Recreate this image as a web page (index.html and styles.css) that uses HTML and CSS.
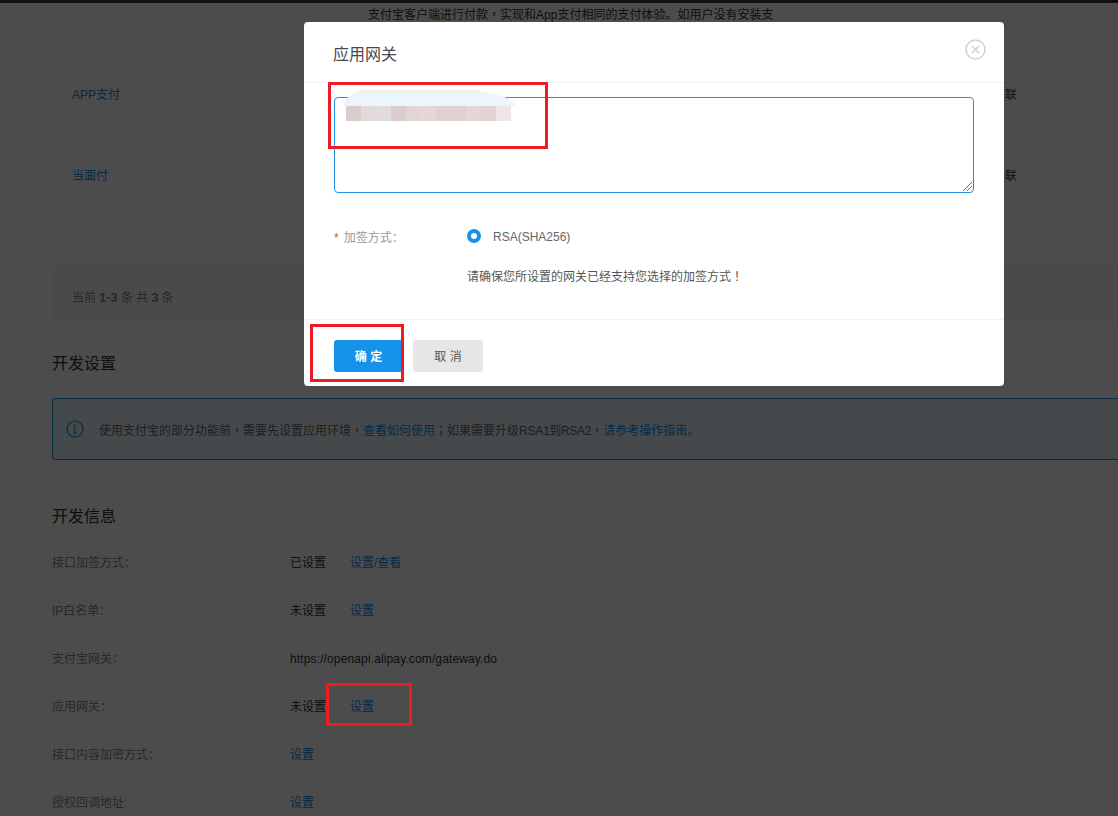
FILE: index.html
```html
<!DOCTYPE html>
<html lang="en">
<head>
    <meta charset="UTF-8">
    <title>应用网关</title>
    <link rel="stylesheet" href="styles.css">
</head>
<body>

    <div class="top-bar"></div>

    <div class="page">
        <p class="intro">支付宝客户端进行付款<span class="mid">，</span>实现和App支付相同的支付体验。如用户没有安装支</p>

        <div class="table">
            <div class="table-row">
                <a class="link">APP支付</a>
                <span class="row-end">关联</span>
            </div>
            <div class="table-row">
                <a class="link">当面付</a>
                <span class="row-end">关联</span>
            </div>
            <div class="table-spare"></div>
            <div class="table-foot">当前<b>1-3</b>条 共<b>3</b>条</div>
        </div>

        <h3 class="section-title">开发设置</h3>
        <div class="notice">
            <svg class="notice-icon" width="18" height="18" viewBox="0 0 18 18">
                <circle cx="9" cy="9" r="8" fill="none" stroke="currentColor" stroke-width="1.2"/>
                <path d="M7.5 5.2h2.2M8.6 5v1.2M7.4 8h1.5v5M7 13h4" fill="none" stroke="currentColor" stroke-width="1.1"/>
            </svg>
            <span>使用支付宝的部分功能前<span class="mid">，</span>需要先设置应用环境<span class="mid">，</span><a class="link">查看如何使用</a><span class="mid">；</span>如果需要升级<span class="tight">RSA1到RSA2</span><span class="mid">，</span><a class="link">请参考操作指南。</a></span>
        </div>

        <h3 class="section-title info-title">开发信息</h3>
        <div class="info-list">
            <div class="info-row">
                <span class="info-label">接口加签方式：</span>
                <span class="info-state">已设置</span>
                <a class="link">设置/查看</a>
            </div>
            <div class="info-row">
                <span class="info-label">IP白名单：</span>
                <span class="info-state">未设置</span>
                <a class="link">设置</a>
            </div>
            <div class="info-row">
                <span class="info-label">支付宝网关：</span>
                <span class="gateway-url">https://openapi.alipay.com/gateway.do</span>
            </div>
            <div class="info-row">
                <span class="info-label">应用网关：</span>
                <span class="info-state">未设置</span>
                <a class="link">设置</a>
            </div>
            <div class="info-row">
                <span class="info-label">接口内容加密方式：</span>
                <a class="link">设置</a>
            </div>
            <div class="info-row">
                <span class="info-label">授权回调地址:</span>
                <a class="link">设置</a>
            </div>
        </div>
    </div>

    <div class="overlay"></div>

    <div class="modal">
        <div class="modal-head">
            <h4 class="modal-title">应用网关</h4>
            <svg class="modal-close" width="21" height="21" viewBox="0 0 21 21">
                <circle cx="10.5" cy="10.5" r="9.5" fill="none" stroke="#d2d2d2" stroke-width="1.6"/>
                <path d="M6.8 6.8l7.4 7.4M14.2 6.8l-7.4 7.4" fill="none" stroke="#d2d2d2" stroke-width="1.6"/>
            </svg>
        </div>
        <div class="modal-body">
            <div class="gateway-input">
                <div class="smudge"></div>
                <div class="blur-text">
                    <i class="b1"></i><i class="b2"></i><i class="b3"></i><i class="b4"></i><i class="b5"></i><i class="b6"></i><i class="b7"></i><i class="b8"></i><i class="b9"></i><i class="b10"></i><i class="b11"></i>
                </div>
                <svg class="resize-grip" width="9" height="9" viewBox="0 0 9 9">
                    <path d="M0 9L9 0M4 9L9 4" stroke="#666" stroke-width="1" fill="none"/>
                </svg>
            </div>
            <div class="sign-row">
                <span class="sign-label"><em>*</em>加签方式：</span>
                <span class="radio"></span>
                <span class="radio-text">RSA(SHA256)</span>
            </div>
            <p class="sign-tip">请确保您所设置的网关已经支持您选择的加签方式<span class="mid">！</span></p>
        </div>
        <div class="modal-foot">
            <button class="btn btn-ok">确 定</button>
            <button class="btn btn-cancel">取 消</button>
        </div>
    </div>

    <!-- red markup boxes drawn on the screenshot -->
    <div class="mark mark-input"></div>
    <div class="mark mark-ok"></div>
    <div class="mark mark-set"></div>

</body>
</html>
```

FILE: styles.css
```css
/* General Styles */
html, body {
    height: 100%;
}
body {
    margin: 0;
    font-family: "Liberation Sans", "Noto Sans CJK SC", sans-serif;
    font-size: 12px;
    color: #000;
    background: #fff;
    overflow: hidden;
}
a {
    text-decoration: none;
}
.link {
    color: #0e8ee9;
}
/* full-width punctuation sits centred in the original font */
.mid {
    font-family: "Noto Sans CJK TC", sans-serif;
}
.tight {
    letter-spacing: -0.3px;
}

.top-bar {
    height: 3px;
    background: #363636;
}

/* Page behind the dialog */
.page {
    padding: 0 0 0 52px;
    width: 1100px;
}
.intro {
    margin: 0;
    height: 60px;
    padding-top: 4px;
    box-sizing: border-box;
    line-height: 14px;
    padding-left: 316px;
    white-space: nowrap;
    color: #333;
}
.table-row {
    display: flex;
    justify-content: space-between;
    height: 81px;
    box-sizing: border-box;
    padding: 23px 135px 0 20px;
    line-height: 16px;
    border-top: 1px solid #eee;
}
.row-end {
    color: #333;
}
.table-spare {
    height: 40px;
}
.table-foot {
    height: 60px;
    line-height: 66px;
    padding-left: 20px;
    background: #f7f7f7;
    color: #888;
}
.table-foot b {
    padding: 0 3px;
    font-size: 13px;
}
.section-title {
    margin: 0;
    font-weight: normal;
    font-size: 16px;
    line-height: 20px;
    color: #333;
    padding-top: 29px;
}
.notice {
    display: flex;
    align-items: center;
    gap: 15px;
    height: 62px;
    box-sizing: border-box;
    margin-top: 24px;
    padding-left: 13px;
    border: 1px solid #0e8ee9;
    border-right: none;
    border-radius: 4px 0 0 4px;
    background: #ecf6fd;
    color: #666;
}
.notice-icon {
    color: #0e8ee9;
    flex: none;
}
.info-title {
    padding-top: 47px;
}
.info-list {
    padding-top: 10px;
}
.info-row {
    display: flex;
    height: 48px;
    align-items: center;
    color: #333;
}
.info-label {
    width: 238px;
    color: #888;
}
.info-state {
    width: 60px;
}
.gateway-url {
    letter-spacing: 0.13px;
    padding-top: 3px;
}

.overlay {
    position: fixed;
    inset: 0;
    background: rgba(0, 0, 0, 0.7);
}

/* Dialog */
.modal {
    position: absolute;
    top: 22px;
    left: 304px;
    width: 700px;
    height: 364px;
    background: #fff;
    border-radius: 4px;
    color: #666;
}
.modal-head {
    display: flex;
    justify-content: space-between;
    align-items: center;
    height: 61px;
    box-sizing: border-box;
    padding: 1px 18px 0 29px;
    border-bottom: 1px solid #f2f2f2;
}
.modal-title {
    margin: 0;
    font-weight: normal;
    font-size: 16px;
    color: #4a4a4a;
}
.modal-close {
    margin-top: -6px;
}
.modal-body {
    height: 237px;
    box-sizing: border-box;
    padding: 14px 30px 0;
    border-bottom: 1px solid #f2f2f2;
}
.gateway-input {
    position: relative;
    height: 96px;
    box-sizing: border-box;
    border: 1px solid #1a92ea;
    border-radius: 4px;
}
.smudge {
    position: absolute;
    top: -8px;
    left: 9px;
    width: 171px;
    height: 16px;
    background: #edf5fc;
    border-radius: 24px 60px 0 0 / 16px 16px 0 0;
}
.smudge::before {
    content: "";
    position: absolute;
    top: 0;
    left: 16px;
    width: 120px;
    height: 1px;
    background: #fbe4e4;
}
.blur-text {
    position: absolute;
    top: 8px;
    left: 11px;
    display: flex;
}
.blur-text i {
    display: block;
    width: 15px;
    height: 15px;
}
.b1 { background: #d9cccc; }
.b2 { background: #e2d9d8; }
.b3 { background: #e0dcdc; }
.b4 { background: #dbcdcd; }
.b5 { background: #e0d6d5; }
.b6 { background: #e4d7d6; }
.b7 { background: #dfd1d1; }
.b8 { background: #dfd1d1; }
.b9 { background: #e4d8d7; }
.b10 { background: #e0d3d3; }
.b11 { background: #efe7e7; }
.resize-grip {
    position: absolute;
    right: 1px;
    bottom: 1px;
}
.sign-row {
    display: flex;
    align-items: center;
    margin-top: 35px;
    height: 16px;
}
.sign-label {
    width: 133px;
    color: #999;
}
.sign-label em {
    font-style: normal;
    color: #f04134;
    margin-right: 5px;
}
.radio {
    width: 6px;
    height: 6px;
    border: 4px solid #1a92ea;
    border-radius: 50%;
    margin-right: 12px;
}
.radio-text {
    color: #666;
    padding-top: 2px;
}
.sign-tip {
    margin: 24px 0 0 133px;
    line-height: 16px;
    color: #555;
}
.modal-foot {
    display: flex;
    gap: 10px;
    padding: 20px 30px 0;
}
.btn {
    width: 69px;
    height: 32px;
    padding: 0 0 2px;
    border: none;
    border-radius: 3px;
    font-family: inherit;
    font-size: 12px;
}
.btn-ok {
    background: #1592ea;
    color: #fff;
    font-weight: bold;
}
.btn-cancel {
    width: 70px;
    background: #e6e6e6;
    color: #555;
}

/* Red markup boxes */
.mark {
    position: absolute;
    box-sizing: border-box;
    border: 3px solid #ed1c24;
}
.mark-input {
    top: 82px;
    left: 328px;
    width: 220px;
    height: 67px;
}
.mark-ok {
    top: 324px;
    left: 310px;
    width: 94px;
    height: 58px;
}
.mark-set {
    top: 683px;
    left: 326px;
    width: 86px;
    height: 43px;
}
```
